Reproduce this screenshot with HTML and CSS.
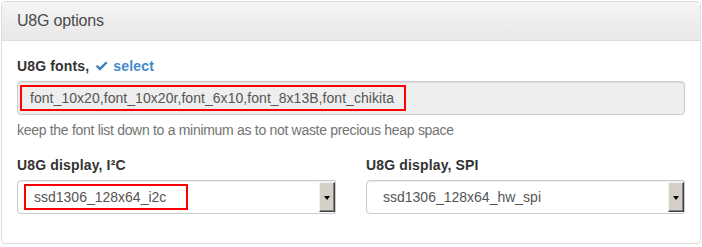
FILE: index.html
```html
<!DOCTYPE html>
<html lang="en">
<head>
    <meta charset="UTF-8">
    <title>U8G options</title>
    <link rel="stylesheet" href="styles.css">
</head>
<body>
    <div class="panel">
        <div class="panel-heading">U8G options</div>
        <div class="panel-body">
            <div class="form-group">
                <label class="control-label">U8G fonts,
                    <a class="select-link" href="#">
                        <svg class="check" width="13" height="11" viewBox="0 0 13 11">
                            <path d="M0.8 5.6 L2.6 3.9 L4.9 6.2 L10.9 0.4 L12.6 2.1 L4.9 9.8 Z" fill="#3a7fc0"/>
                            <path d="M0.8 5.6 L2.6 3.9 L2.6 4.6 L1.4 5.8 Z" fill="#e0789a"/>
                        </svg>
                        select</a>
                </label>
                <div class="form-control readonly">
                    <span class="value mark font-list">font_10x20,font_10x20r,font_6x10,font_8x13B,font_chikita</span>
                </div>
                <p class="help-block">keep the font list down to a minimum as to not waste precious heap space</p>
            </div>

            <div class="row">
                <div class="col">
                    <label class="control-label">U8G display, I²C</label>
                    <div class="form-control select">
                        <span class="value mark display-name">ssd1306_128x64_i2c</span>
                        <span class="dropdown"><span class="arrow"></span></span>
                    </div>
                </div>
                <div class="col">
                    <label class="control-label">U8G display, SPI</label>
                    <div class="form-control select">
                        <span class="value">ssd1306_128x64_hw_spi</span>
                        <span class="dropdown"><span class="arrow"></span></span>
                    </div>
                </div>
            </div>
        </div>
    </div>
</body>
</html>
```

FILE: styles.css
```css
body {
    margin: 1px;
    font-family: "Liberation Sans", Arial, sans-serif;
    font-size: 14px;
    line-height: 20px;
    color: #333;
    background: #fff;
}

.panel {
    width: 698px;
    border: 1px solid #ddd;
    border-radius: 4px;
    box-shadow: 0 1px 1px rgba(0, 0, 0, 0.05);
}

.panel-heading {
    height: 38px;
    padding: 0 15px;
    line-height: 38px;
    font-size: 16px;
    letter-spacing: -0.2px;
    color: #4a4a4a;
    background: linear-gradient(#f5f5f5, #e8e8e8);
    border-bottom: 1px solid #ddd;
    border-radius: 3px 3px 0 0;
}

.panel-body {
    padding: 15px 15px 29px;
}

.control-label {
    display: block;
    font-weight: bold;
    letter-spacing: 0.15px;
    margin-bottom: 5px;
}

.select-link {
    color: #428bca;
    text-decoration: none;
    margin-left: 2px;
}

.check {
    vertical-align: -1px;
    margin-right: 1px;
}

.form-control {
    display: flex;
    align-items: center;
    height: 32px;
    padding: 0 2px;
    border: 1px solid #ccc;
    border-radius: 4px;
    color: #555;
    background: #fff;
    box-shadow: inset 0 1px 1px rgba(0, 0, 0, 0.075);
}

.readonly {
    background: #eee;
}

.value {
    box-sizing: border-box;
    height: 26px;
    line-height: 22px;
    padding: 0 9px 0 8px;
    border: 2px solid transparent;
}

.value.mark {
    border-color: #f00;
}

.font-list {
    width: 386px;
    letter-spacing: 0.05px;
}

.display-name {
    width: 164px;
}

.help-block {
    margin: 5px 0 0;
    color: #737373;
    letter-spacing: -0.3px;
}

.row {
    display: grid;
    grid-template-columns: 1fr 1fr;
    column-gap: 30px;
    margin-top: 15px;
}

.select {
    padding: 0 0 0 6px;
    justify-content: space-between;
    border-radius: 4px 2px 2px 4px;
}

.dropdown {
    display: flex;
    align-items: center;
    justify-content: center;
    align-self: stretch;
    width: 14px;
    margin: 1px 0;
    background: #d4d0c8;
    border: 1px solid;
    border-color: #f4f3ee #404040 #404040 #f4f3ee;
    box-shadow: inset -1px -1px 0 #808080;
}

.arrow {
    width: 0;
    height: 0;
    border-left: 3.5px solid transparent;
    border-right: 3.5px solid transparent;
    border-top: 4px solid #000;
    margin-top: 1px;
}
```
